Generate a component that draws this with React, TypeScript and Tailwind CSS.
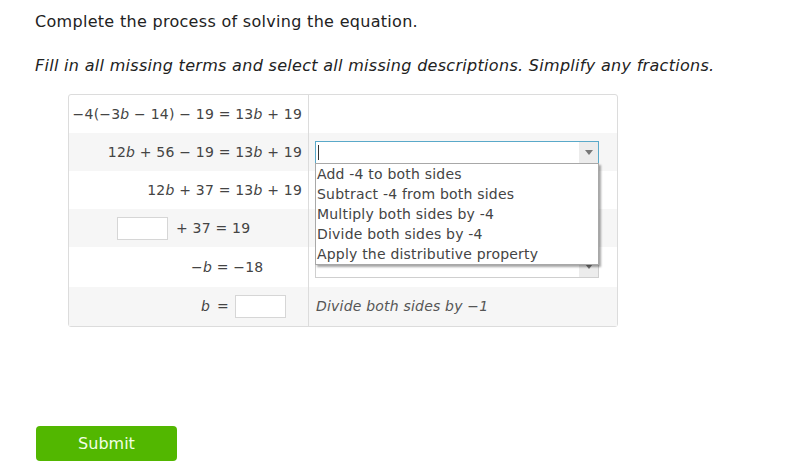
import type { ReactNode } from 'react';

const font = { fontFamily: '"DejaVu Sans", Verdana, sans-serif' };

function V({ children }: { children: ReactNode }) {
  return <i>{children}</i>;
}

function Blank({ w = 'w-[51px]' }: { w?: string }) {
  return <span className={`inline-block ${w} h-[23px] border border-[#d6d6d6] bg-white align-middle`} />;
}

function Select({ focused = false }: { focused?: boolean }) {
  return (
    <div
      className={`flex h-[23px] w-[284px] items-stretch border bg-white ${
        focused ? 'border-[#5aa9c9]' : 'border-[#cfcfcf]'
      }`}
    >
      <div className="flex flex-1 items-center pl-[2px]">
        {focused && <span className="h-[15px] w-px bg-[#333]" />}
      </div>
      <div className="flex w-[19px] items-center justify-center bg-[#ececec]">
        <span className="border-x-[4px] border-t-[5px] border-x-transparent border-t-[#777]" />
      </div>
    </div>
  );
}

const options = [
  'Add -4 to both sides',
  'Subtract -4 from both sides',
  'Multiply both sides by -4',
  'Divide both sides by -4',
  'Apply the distributive property',
];

export default function App() {
  return (
    <div className="h-[471px] w-[800px] bg-white pl-[35px] pt-[12px] text-[#222]" style={font}>
      <p className="text-[16px] leading-5 tracking-[0.3px]">Complete the process of solving the equation.</p>
      <p className="mt-[24px] text-[16px] italic leading-5 tracking-[0.3px]">
        Fill in all missing terms and select all missing descriptions. Simplify any fractions.
      </p>

      {/* Tabla */}
      <div className="relative mt-[18px] ml-[33px] w-[550px] rounded-[3px] border border-[#dcdcdc] text-[14px] tracking-[0.2px] text-[#444]">
        <div className="grid grid-cols-[240px_1fr]">
          {/* fila 1 */}
          <div className="flex h-[38px] items-center justify-end border-r border-[#dcdcdc] pr-[6px]">
            −4(−3<V>b</V>&nbsp;−&nbsp;14)&nbsp;−&nbsp;19&nbsp;=&nbsp;13<V>b</V>&nbsp;+&nbsp;19
          </div>
          <div className="h-[38px]" />

          {/* fila 2 */}
          <div className="flex h-[38px] items-center justify-end border-r border-[#dcdcdc] bg-[#f6f6f6] pr-[6px]">
            12<V>b</V>&nbsp;+&nbsp;56&nbsp;−&nbsp;19&nbsp;=&nbsp;13<V>b</V>&nbsp;+&nbsp;19
          </div>
          <div className="flex h-[38px] items-center bg-[#f6f6f6] pl-[6px]">
            <Select focused />
          </div>

          {/* fila 3 */}
          <div className="flex h-[38px] items-center justify-end border-r border-[#dcdcdc] pr-[6px]">
            12<V>b</V>&nbsp;+&nbsp;37&nbsp;=&nbsp;13<V>b</V>&nbsp;+&nbsp;19
          </div>
          <div className="h-[38px]" />

          {/* fila 4 */}
          <div className="flex h-[38px] items-center border-r border-[#dcdcdc] bg-[#f6f6f6] pl-[48px]">
            <Blank />
            <span className="ml-[8px]">+&nbsp;37&nbsp;=&nbsp;19</span>
          </div>
          <div className="h-[38px] bg-[#f6f6f6]" />

          {/* fila 5 */}
          <div className="flex h-[40px] items-center border-r border-[#dcdcdc] pl-[122px]">
            −<V>b</V>&nbsp;=&nbsp;−18
          </div>
          <div className="flex h-[40px] items-start pl-[6px] pt-[8px]">
            <Select />
          </div>

          {/* fila 6 */}
          <div className="flex h-[39px] items-center border-r border-[#dcdcdc] bg-[#f6f6f6] pl-[132px]">
            <V>b</V>
            <span className="ml-[7px]">=</span>
            <span className="ml-[6px]">
              <Blank />
            </span>
          </div>
          <div className="flex h-[39px] items-center bg-[#f6f6f6] pl-[7px] italic text-[#555]">
            Divide both sides by −1
          </div>
        </div>

        {/* menú desplegable */}
        <div className="absolute left-[246px] top-[68px] w-[284px] border border-[#a8a8a8] bg-white text-[14px] leading-5 text-[#444] shadow-[2px_2px_2px_rgba(0,0,0,0.35)]">
          {options.map((o) => (
            <div key={o} className="h-[20px] pl-[1px]">
              {o}
            </div>
          ))}
        </div>
      </div>

      <button className="mt-[99px] ml-px flex h-[35px] w-[141px] items-center justify-center rounded-[4px] bg-[#52b700] text-[16px] text-[#f3ffe6]">
        Submit
      </button>
    </div>
  );
}
